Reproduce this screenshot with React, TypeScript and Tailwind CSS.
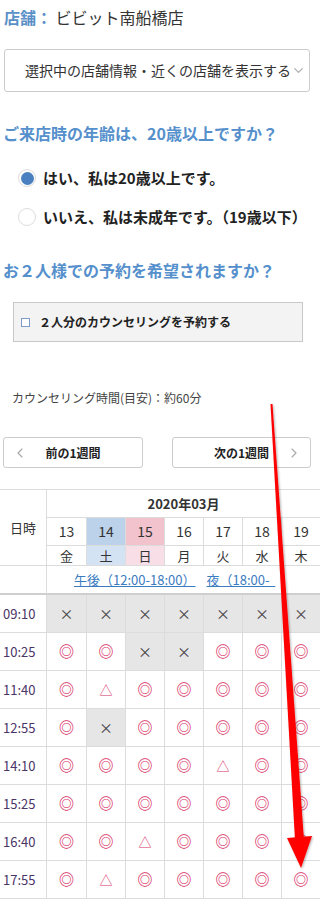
import { ChevronDown, ChevronLeft, ChevronRight } from "lucide-react";

type Mark = "o" | "x" | "t";

const days = [
  { d: "13", w: "金", dateBg: "", dayBg: "" },
  { d: "14", w: "土", dateBg: "bg-[#bcd1ea]", dayBg: "bg-[#d4e3f3]" },
  { d: "15", w: "日", dateBg: "bg-[#f2c3cd]", dayBg: "bg-[#f7dee7]" },
  { d: "16", w: "月", dateBg: "", dayBg: "" },
  { d: "17", w: "火", dateBg: "", dayBg: "" },
  { d: "18", w: "水", dateBg: "", dayBg: "" },
  { d: "19", w: "木", dateBg: "", dayBg: "" },
];

const slots: { time: string; marks: Mark[] }[] = [
  { time: "09:10", marks: ["x", "x", "x", "x", "x", "x", "x"] },
  { time: "10:25", marks: ["o", "o", "x", "x", "o", "o", "o"] },
  { time: "11:40", marks: ["o", "t", "o", "o", "o", "o", "o"] },
  { time: "12:55", marks: ["o", "x", "o", "o", "o", "o", "o"] },
  { time: "14:10", marks: ["o", "o", "o", "o", "t", "o", "o"] },
  { time: "15:25", marks: ["o", "o", "o", "o", "o", "o", "o"] },
  { time: "16:40", marks: ["o", "o", "t", "o", "o", "o", "o"] },
  { time: "17:55", marks: ["o", "t", "o", "o", "o", "o", "o"] },
];

const cell = "box-border border-r border-b border-[#dcdcdc] flex items-center justify-center";

const MarkCell = ({ m }: { m: Mark }) => {
  if (m === "x") {
    return (
      <div className={`${cell} h-[38px] bg-[#e6e6e6] text-[#444] text-[14px]`}>×</div>
    );
  }
  return (
    <div className={`${cell} h-[38px] bg-white text-[#d93268] ${m === "o" ? "text-[15px] font-bold" : "text-[13px]"}`}>
      {m === "o" ? "◎" : "△"}
    </div>
  );
};

const Arrow = () => (
  <svg
    className="absolute left-0 top-0 pointer-events-none"
    width="320"
    height="900"
    viewBox="0 0 320 900"
  >
    <defs>
      <filter id="sh" x="-50%" y="-10%" width="200%" height="120%">
        <feDropShadow dx="1" dy="1" stdDeviation="1.2" floodColor="#000" floodOpacity="0.3" />
      </filter>
    </defs>
    <g filter="url(#sh)" fill="#ff0000">
      <polygon points="270.5,404 272.5,404 304,840 295,840" />
      <polygon points="287,838 312,836 301,868" />
    </g>
  </svg>
);

export default function App() {
  return (
    <div className="relative w-[320px] min-h-[900px] overflow-hidden bg-white text-[#333] font-['Noto_Sans_CJK_JP','Noto_Sans',sans-serif]">
      <div className="pt-[7px] pl-[4px] text-[16px] leading-[20px] whitespace-nowrap">
        <span className="font-bold text-[#5a90c8]">店舗：</span> ビビット南船橋店
      </div>

      <div className="mt-[22px] ml-[4px] w-[306px] h-[43px] box-border border border-[#cccccc] rounded-[3px] flex items-center pl-[20px] text-[14px] whitespace-nowrap">
        <span>選択中の店舗情報・近くの店舗を表示する</span>
        <ChevronDown size={15} strokeWidth={2} className="text-[#b0b0b0] shrink-0" />
      </div>

      <div className="mt-[31px] pl-[3px] text-[16px] leading-[20px] font-bold text-[#5590cc] whitespace-nowrap">
        ご来店時の年齢は、20歳以上ですか？
      </div>

      <div className="mt-[25px] flex items-center h-[20px] whitespace-nowrap">
        <span className="ml-[18px] w-[18px] h-[18px] rounded-full border border-[#dddddd] flex items-center justify-center box-border">
          <span className="w-[13px] h-[13px] rounded-full bg-[#4a80c0]" />
        </span>
        <span className="ml-[7px] text-[15px] font-bold text-[#222]">はい、私は20歳以上です。</span>
      </div>
      <div className="mt-[19px] flex items-center h-[20px] whitespace-nowrap">
        <span className="ml-[18px] w-[18px] h-[18px] shrink-0 rounded-full border border-[#dddddd] bg-white box-border" />
        <span className="ml-[7px] text-[15px] font-bold text-[#222]">いいえ、私は未成年です。（19歳以下）</span>
      </div>

      <div className="mt-[33px] pl-[3px] text-[16px] leading-[20px] font-bold text-[#5590cc] whitespace-nowrap">
        お２人様での予約を希望されますか？
      </div>

      <div className="mt-[22px] ml-[13px] w-[290px] h-[40px] box-border border border-[#c8c8c8] bg-[#f3f3f3] flex items-center">
        <span className="ml-[7px] w-[9px] h-[9px] box-border border border-[#7d9ccb] bg-white" />
        <span className="ml-[9px] text-[12px] font-bold text-[#222]">２人分のカウンセリングを予約する</span>
      </div>

      <div className="mt-[48px] pl-[12px] text-[12px] leading-[16px] text-[#444]">
        カウンセリング時間(目安)：約60分
      </div>

      <div className="mt-[31px] flex h-[31px]">
        <div className="ml-[3px] w-[140px] box-border border border-[#cccccc] rounded-[3px] flex items-center relative">
          <ChevronLeft size={16} strokeWidth={1.75} className="absolute left-[8px] text-[#aaa]" />
          <span className="w-full text-center text-[12px] font-bold text-[#222]">前の1週間</span>
        </div>
        <div className="ml-[29px] w-[139px] box-border border border-[#cccccc] rounded-[3px] flex items-center relative">
          <span className="w-full text-center text-[12px] font-bold text-[#222]">次の1週間</span>
          <ChevronRight size={16} strokeWidth={1.75} className="absolute right-[8px] text-[#aaa]" />
        </div>
      </div>

      <div className="mt-[21px] border-t border-[#dcdcdc] grid grid-cols-[47px_40px_39px_39px_39px_39px_39px_39px] w-[321px]">
        <div className={`${cell} row-span-3 text-[13px]`}>日時</div>
        <div className={`${cell} col-span-7 h-[28px] text-[13px] font-bold`}>2020年03月</div>
        {days.map((d) => (
          <div key={d.d} className={`${cell} h-[28px] text-[14px] ${d.dateBg}`}>
            {d.d}
          </div>
        ))}
        {days.map((d) => (
          <div key={d.w} className={`${cell} h-[20px] text-[13px] ${d.dayBg}`}>
            {d.w}
          </div>
        ))}
        <div className="box-border border-r border-b-2 border-r-[#dcdcdc] border-b-[#cfcfcf] h-[29px]" />
        <div className="col-span-7 box-border border-b-2 border-[#cfcfcf] h-[29px] flex items-center pl-[27px] text-[13px] text-[#3b7bbf] whitespace-nowrap overflow-hidden">
          <span className="underline">午後（12:00-18:00）</span>
          <span className="ml-[11px] underline">夜（18:00-&nbsp;&nbsp;</span>
        </div>
        {slots.map((s) => (
          <div key={s.time} className="contents">
            <div className={`${cell} h-[38px] !justify-start pl-[3px] text-[13px] text-[#4a3366]`}>{s.time}</div>
            {s.marks.map((m, i) => (
              <MarkCell key={i} m={m} />
            ))}
          </div>
        ))}
      </div>

      <Arrow />
    </div>
  );
}
